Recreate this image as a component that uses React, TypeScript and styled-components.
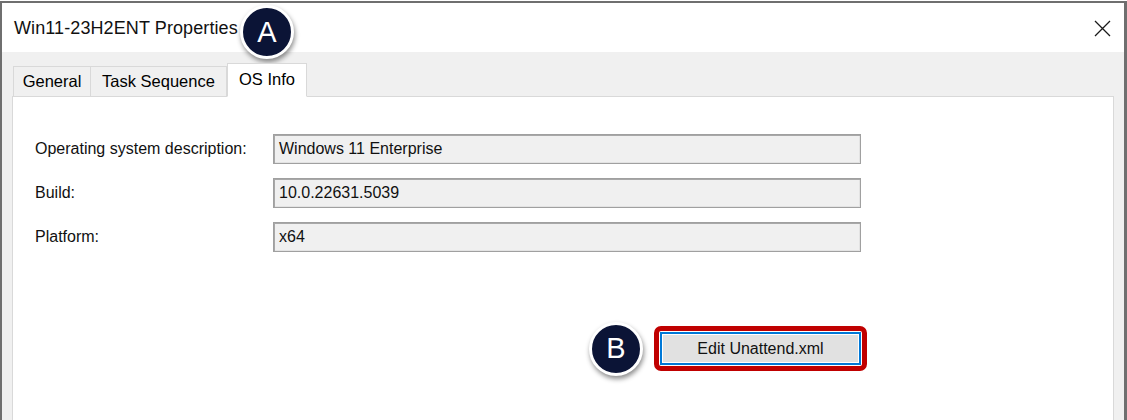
import React from "react";
import styled, { createGlobalStyle } from "styled-components";

const Global = createGlobalStyle`
  html, body { margin: 0; padding: 0; background: #ffffff; }
  body { font-family: "Liberation Sans", Arial, sans-serif; }
  * { box-sizing: border-box; }
`;

const Window = styled.div`
  position: relative;
  width: 1127px;
  height: 420px;
  margin-top: 1px;
  border: 2px solid #6f6f6f;
  border-bottom: none;
  border-right-width: 3px;
  display: flex;
  flex-direction: column;
  background: #ffffff;
  overflow: hidden;
`;

const TitleBar = styled.div`
  height: 49px;
  flex: none;
  display: flex;
  align-items: center;
  justify-content: space-between;
  padding: 2px 11px 0 12px;
  background: #ffffff;
`;

const Title = styled.span`
  font-family: "Liberation Sans", Arial, sans-serif;
  font-size: 18px;
  letter-spacing: 0.1px;
  color: #111111;
`;

const CloseButton = styled.button`
  width: 22px;
  height: 22px;
  border: none;
  background: transparent;
  padding: 0;
  display: flex;
  align-items: center;
  justify-content: center;
`;

const Body = styled.div`
  flex: 1;
  display: flex;
  flex-direction: column;
  background: #f0f0f0;
  padding: 11px 10px 0 10px;
`;

const TabStrip = styled.div`
  display: flex;
  align-items: flex-end;
  height: 34px;
  padding-left: 1px;
  position: relative;
  z-index: 1;
  margin-bottom: -1px;
`;

const Tab = styled.div<{ $active?: boolean; $width: number }>`
  width: ${(p) => p.$width}px;
  font-size: 16.5px;
  color: #000000;
  display: flex;
  align-items: center;
  justify-content: center;
  border: 1px solid #d9d9d9;
  height: ${(p) => (p.$active ? "34px" : "31px")};
  padding-bottom: ${(p) => (p.$active ? "2px" : "0")};
  background: ${(p) => (p.$active ? "#ffffff" : "#f0f0f0")};
  border-bottom: ${(p) => (p.$active ? "1px solid #ffffff" : "1px solid #d9d9d9")};
  margin-left: ${(p) => (p.$active ? "0" : "-1px")};
  &:first-child { margin-left: 0; }
`;

const Panel = styled.div`
  flex: 1;
  background: #ffffff;
  border: 1px solid #d9d9d9;
  border-bottom: none;
  padding: 37px 0 0 22px;
`;

const Form = styled.div`
  width: 826px;
  display: grid;
  grid-template-columns: 238px 588px;
  row-gap: 14px;
  align-items: center;
`;

const Label = styled.span`
  font-size: 16px;
  color: #111111;
`;

const ReadOnlyBox = styled.div`
  height: 30px;
  border: 1px solid #a0a0a0;
  box-shadow: inset 1px 1px 0 #a8a8a8, inset -1px -1px 0 #e3e3e3;
  background: #f0f0f0;
  font-size: 16px;
  color: #111111;
  display: flex;
  align-items: center;
  padding-left: 5px;
`;

const ButtonRow = styled.div`
  width: 826px;
  display: flex;
  justify-content: flex-end;
  margin-top: 80px;
`;

const ButtonWrap = styled.div`
  position: relative;
`;

const Highlight = styled.div`
  position: absolute;
  top: -6px;
  bottom: -6px;
  left: -6px;
  right: -6px;
  border: 5px solid #c00000;
  border-radius: 7px;
  pointer-events: none;
`;

const PushButton = styled.button`
  width: 201px;
  height: 33px;
  background: #e1e1e1;
  border: 2px solid #0078d7;
  box-shadow: inset 0 0 0 1px #ffffff;
  font-family: "Liberation Sans", Arial, sans-serif;
  font-size: 16px;
  color: #111111;
  padding: 0;
`;

const Badge = styled.div`
  position: absolute;
  width: 54px;
  height: 54px;
  border-radius: 50%;
  background: #0b1436;
  border: 3px solid #ffffff;
  box-shadow: 1px 3px 5px rgba(0, 0, 0, 0.45);
  color: #ffffff;
  font-family: "Liberation Sans", Arial, sans-serif;
  font-size: 29px;
  display: flex;
  align-items: center;
  justify-content: center;
`;

const BadgeA = styled(Badge)`
  left: 238px;
  top: 2px;
`;

const BadgeB = styled(Badge)`
  right: calc(100% + 17px);
  top: 50%;
  transform: translateY(-50%);
`;

const rows: [string, string][] = [
  ["Operating system description:", "Windows 11 Enterprise"],
  ["Build:", "10.0.22631.5039"],
  ["Platform:", "x64"],
];

const tabs: { label: string; width: number; active?: boolean }[] = [
  { label: "General", width: 78 },
  { label: "Task Sequence", width: 137 },
  { label: "OS Info", width: 80, active: true },
];

export default function App() {
  return (
    <>
      <Global />
      <Window>
        <TitleBar>
          <Title>Win11-23H2ENT Properties</Title>
          <CloseButton aria-label="Close">
            <svg width="17" height="17" viewBox="0 0 17 17">
              <path d="M1 1 L16 16 M16 1 L1 16" stroke="#1a1a1a" strokeWidth="1.3" fill="none" />
            </svg>
          </CloseButton>
        </TitleBar>
        <Body>
          <TabStrip>
            {tabs.map((t) => (
              <Tab key={t.label} $width={t.width} $active={t.active}>
                {t.label}
              </Tab>
            ))}
          </TabStrip>
          <Panel>
            <Form>
              {rows.map(([label, value]) => (
                <React.Fragment key={label}>
                  <Label>{label}</Label>
                  <ReadOnlyBox>{value}</ReadOnlyBox>
                </React.Fragment>
              ))}
            </Form>
            <ButtonRow>
              <ButtonWrap>
                <BadgeB>B</BadgeB>
                <PushButton>Edit Unattend.xml</PushButton>
                <Highlight />
              </ButtonWrap>
            </ButtonRow>
          </Panel>
        </Body>
        <BadgeA>A</BadgeA>
      </Window>
    </>
  );
}
